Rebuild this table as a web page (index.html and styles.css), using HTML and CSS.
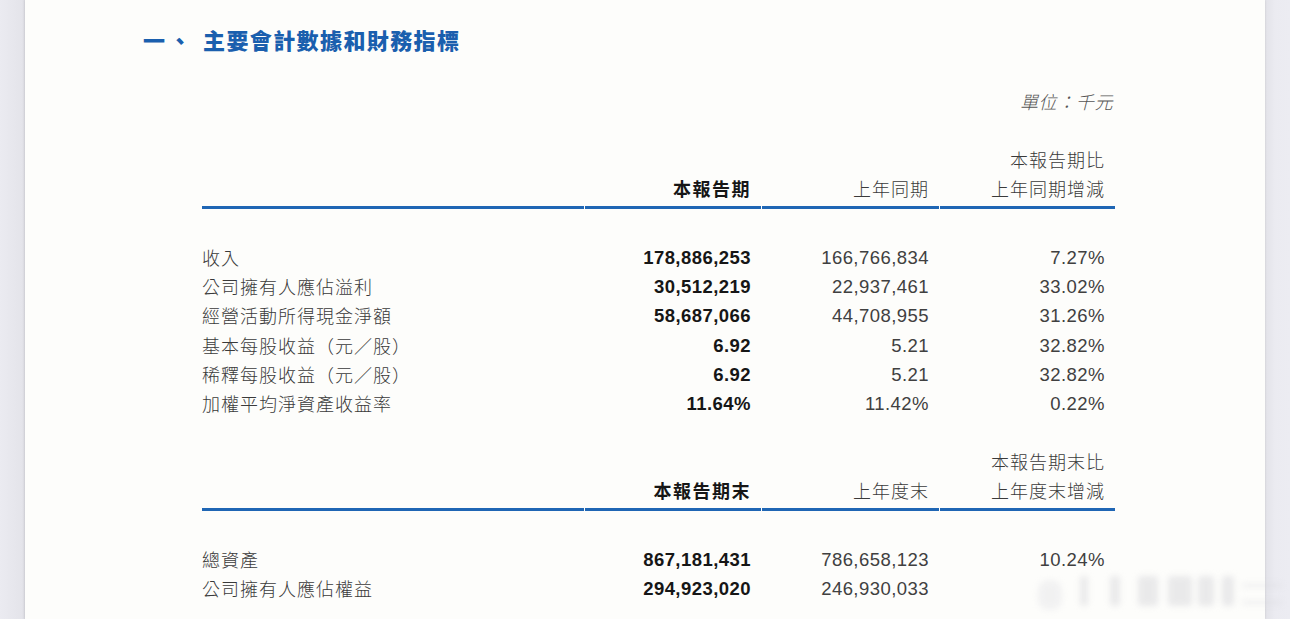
FILE: index.html
```html
<!DOCTYPE html>
<html lang="zh-Hant">
<head>
<meta charset="utf-8">
<title>主要會計數據和財務指標</title>
<link rel="stylesheet" href="styles.css">
</head>
<body>
<div class="sheet">
  <div class="page">
    <h1 class="title"><span class="num">一、</span><span class="txt">主要會計數據和財務指標</span></h1>
    <div class="content">
      <div class="unit">單位：千元</div>

      <table class="fin">
        <colgroup>
          <col class="c-label"><col class="c-a"><col class="c-b"><col class="c-c">
        </colgroup>
        <thead>
          <tr>
            <th class="lab"></th>
            <th class="strong">本報告期</th>
            <th>上年同期</th>
            <th>本報告期比<br>上年同期增減</th>
          </tr>
        </thead>
        <tbody>
          <tr class="first"><td class="lab">收入</td><td class="strong">178,886,253</td><td>166,766,834</td><td>7.27%</td></tr>
          <tr><td class="lab">公司擁有人應佔溢利</td><td class="strong">30,512,219</td><td>22,937,461</td><td>33.02%</td></tr>
          <tr><td class="lab">經營活動所得現金淨額</td><td class="strong">58,687,066</td><td>44,708,955</td><td>31.26%</td></tr>
          <tr><td class="lab">基本每股收益（元／股）</td><td class="strong">6.92</td><td>5.21</td><td>32.82%</td></tr>
          <tr><td class="lab">稀釋每股收益（元／股）</td><td class="strong">6.92</td><td>5.21</td><td>32.82%</td></tr>
          <tr><td class="lab">加權平均淨資產收益率</td><td class="strong">11.64%</td><td>11.42%</td><td>0.22%</td></tr>
        </tbody>
      </table>

      <table class="fin second">
        <colgroup>
          <col class="c-label"><col class="c-a"><col class="c-b"><col class="c-c">
        </colgroup>
        <thead>
          <tr>
            <th class="lab"></th>
            <th class="strong">本報告期末</th>
            <th>上年度末</th>
            <th>本報告期末比<br>上年度末增減</th>
          </tr>
        </thead>
        <tbody>
          <tr class="first"><td class="lab">總資產</td><td class="strong">867,181,431</td><td>786,658,123</td><td>10.24%</td></tr>
          <tr><td class="lab">公司擁有人應佔權益</td><td class="strong">294,923,020</td><td>246,930,033</td><td></td></tr>
        </tbody>
      </table>
    </div>
  </div>
  <div class="watermark">
    <span class="wm a"></span><span class="wm b"></span><span class="wm c"></span><span class="wm d"></span><span class="wm e"></span><span class="wm f"></span><span class="wm g"></span><span class="wm h"></span><span class="wm i"></span>
  </div>
</div>
</body>
</html>
```
FILE: styles.css
```css
html, body {
  margin: 0;
  padding: 0;
  height: 100%;
  overflow: hidden;
}
body {
  background: #ececf2;
  font-family: "Noto Sans CJK TC", "Liberation Sans", sans-serif;
}
.sheet {
  position: relative;
  height: 619px;
  padding: 0 25px;
  background: linear-gradient(to right, #ebebf1 0, #e4e4ea 22px, #d9d9df 25px, transparent 25px, transparent 1265px, #e2e2e8 1265px, #ebebf1 1275px, #ececf2 100%);
}
.page {
  height: 619px;
  background: #fdfdfb;
  box-shadow: 0 0 2px rgba(0,0,0,0.12);
}
.title {
  margin: 0;
  padding: 24px 0 0 118px;
  height: 30px;
  line-height: 30px;
  font-size: 22px;
  font-weight: 900;
  color: #1a5fae;
  display: flex;
}
.title .num {
  width: 60px;
  letter-spacing: 4px;
}
.title .txt {
  letter-spacing: 1.4px;
}
.content {
  padding-left: 177px;
  width: 914px;
}
.unit {
  margin-top: 33px;
  height: 29px;
  line-height: 29px;
  text-align: right;
  padding-right: 3px;
  font-size: 18px;
  font-style: italic;
  font-weight: 300;
  letter-spacing: 0.6px;
  color: #555;
}
.fin {
  width: 914px;
  border-collapse: separate;
  border-spacing: 1px 0;
  margin: 29px -1px 0 -1px;
  table-layout: fixed;
  font-size: 18px;
  color: #3a3a3a;
}
.fin.second {
  margin-top: 29px;
}
.c-label { width: 382px; }
.c-a { width: 176px; }
.c-b { width: 177px; }
.c-c { width: 175px; }
.fin th {
  font-weight: 300;
  line-height: 29px;
  text-align: right;
  vertical-align: bottom;
  padding: 0 10px 3px 0;
  border-bottom: 3px solid #1f66b4;
  letter-spacing: 1px;
  color: #3a3a3a;
}
.fin th.strong {
  font-weight: 700;
  color: #161616;
  letter-spacing: 1.5px;
  padding-right: 10px;
}
.fin td {
  height: 29.2px;
  line-height: 29.2px;
  padding: 0 10px 0 0;
  text-align: right;
  font-family: "Liberation Sans", "Noto Sans CJK TC", sans-serif;
  font-size: 18.5px;
  letter-spacing: 0.45px;
  color: #404040;
  white-space: nowrap;
}
.fin tr.first td {
  padding-top: 34px;
}
.fin td.lab {
  text-align: left;
  padding-left: 0;
  font-family: "Noto Sans CJK TC", sans-serif;
  font-size: 18px;
  font-weight: 300;
  letter-spacing: 1px;
  color: #3a3a3a;
}
.fin td.strong {
  font-weight: 700;
  color: #161616;
}
.watermark {
  position: absolute;
  left: 1030px;
  top: 568px;
  width: 260px;
  height: 45px;
  filter: blur(3px);
  opacity: 0.5;
}
.wm {
  position: absolute;
  top: 8px;
  height: 30px;
  background: #d6d6da;
  border-radius: 3px;
}
.wm.a { left: 8px; width: 24px; top: 12px; background: #e6e6e9; border-radius: 10px; }
.wm.b { left: 50px; width: 8px; }
.wm.c { left: 80px; width: 10px; }
.wm.d { left: 108px; width: 20px; }
.wm.e { left: 138px; width: 24px; }
.wm.f { left: 168px; width: 16px; }
.wm.g { left: 192px; width: 12px; }
.wm.h { left: 212px; width: 40px; height: 3px; top: 16px; }
.wm.i { left: 212px; width: 40px; height: 3px; top: 33px; }
```
